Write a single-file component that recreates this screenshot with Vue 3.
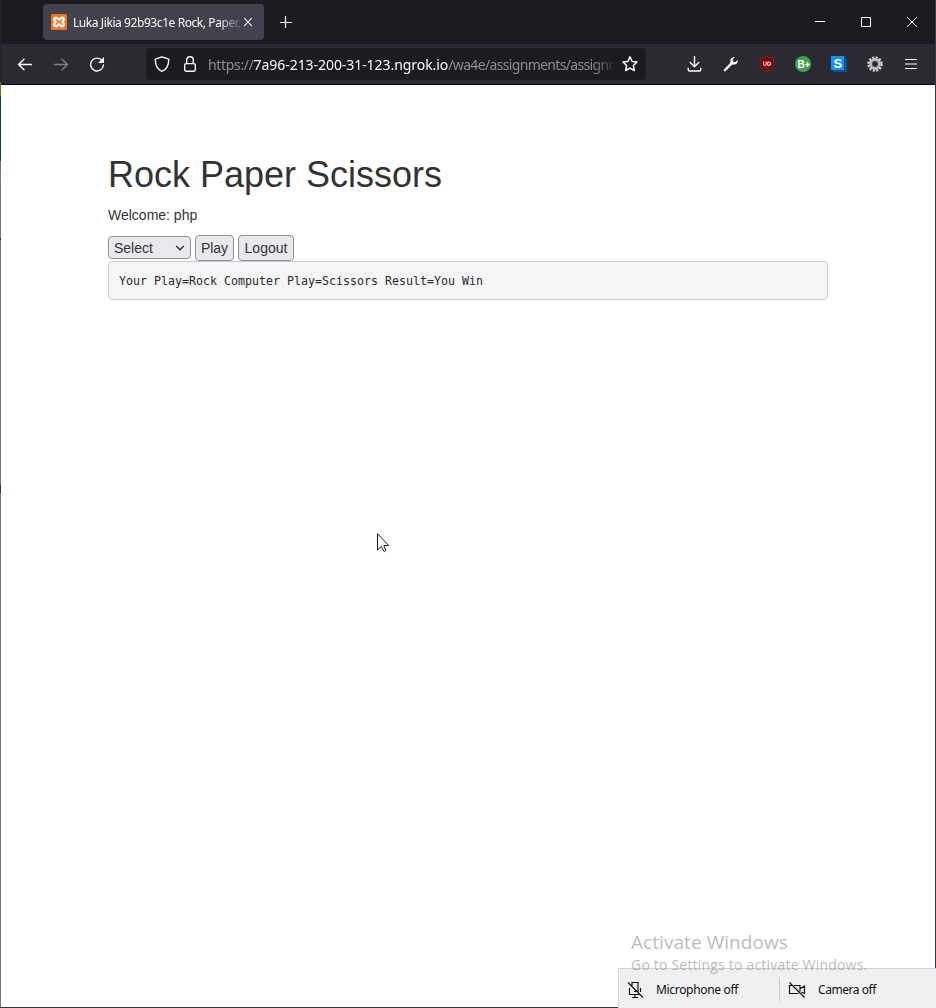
<script setup>
const title = 'Luka Jikia 92b93c1e Rock, Paper,'
const result = 'Your Play=Rock Computer Play=Scissors Result=You Win'
</script>

<template>
  <div class="window">
    <div class="edge"></div>
    <header class="tabbar">
      <div class="tab">
        <svg class="favicon" width="16" height="16" viewBox="0 0 16 16">
          <rect width="16" height="16" rx="1.5" fill="#f37623" />
          <path d="M5.3 3.6C3.4 3.6 2.9 4.8 3.3 6c.2.8.8 1.4 1.4 2-.7.6-1.4 1.2-1.5 2.2-.1 1.2.7 2.1 2 2.1C6.900 12.300 6.900 10 8 10s1.100 2.300 2.800 2.300c1.300 0 2.100-.9 2-2.100-.1-1-.8-1.600-1.500-2.200.6-.6 1.200-1.200 1.400-2 .4-1.200-.1-2.400-2-2.400-1.400 0-1.700 2.200-2.700 2.200S6.700 3.600 5.300 3.600Z" fill="none" stroke="#fff" stroke-width="2.200" />
        </svg>
        <span class="tab-title">{{ title }}</span>
        <svg class="close" width="10" height="10" viewBox="0 0 10 10"><path d="M1.200 1.200l7.600 7.600M8.800 1.200L1.200 8.800" stroke="#fbfbfe" stroke-width="1.100" /></svg>
      </div>
      <svg class="plus" width="12" height="12" viewBox="0 0 12 12"><path d="M0 6.500h12M5.500 0v12" stroke="#fbfbfe" stroke-width="1.200" /></svg>
      <div class="controls">
        <svg width="46" height="44" viewBox="0 0 46 44"><path d="M18 21.500h10" stroke="#fff" /></svg>
        <svg width="46" height="44" viewBox="0 0 46 44"><path d="M18.500 17.500h9v9h-9z" fill="none" stroke="#fff" /></svg>
        <svg width="46" height="44" viewBox="0 0 46 44"><path d="M18 17l10 10M28 17L18 27" stroke="#fff" /></svg>
      </div>
    </header>

    <nav class="toolbar">
      <div class="navs">
        <svg width="16" height="16" viewBox="0 0 16 16"><path d="M14.500 8.500H1.500M7 3.200L1.500 8.500l5.500 5.300" class="line" /></svg>
        <svg class="dim" width="16" height="16" viewBox="0 0 16 16"><path d="M1.500 8.500h13M9 3.200l5.500 5.300L9 13.800" class="line" /></svg>
        <svg width="16" height="16" viewBox="0 0 16 16"><path d="M13.200 4.800A6.400 6.400 0 1 0 14.400 9" class="line" /><path d="M15 1v6H9z" fill="#fbfbfe" /></svg>
      </div>
      <div class="urlbar">
        <svg class="shield" width="16" height="16" viewBox="0 0 16 16"><path d="M8 .8l6.200 2.100c.4.100.6.400.6.800C14.600 9 12.500 13.500 8 15.300 3.500 13.500 1.400 9 1.200 3.700c0-.4.200-.7.600-.8z" class="line" /></svg>
        <svg class="lock" width="14" height="16" viewBox="0 0 14 16"><rect x="1.700" y="7.600" width="10.600" height="7.600" rx="1.400" class="line" /><path d="M3.700 7.500V4a3.300 3.300 0 0 1 6.600 0v3.500" class="line" /></svg>
        <div class="url"><span class="scheme">https://</span><b>7a96-213-200-31-123.ngrok.io</b><span class="path">/wa4e/assignments/assignn</span></div>
        <svg class="star" width="16" height="16" viewBox="0 0 16 16"><path d="M8 .9l2.100 4.500 4.900.6-3.600 3.500.9 5-4.300-2.400-4.300 2.400.9-5L1 6l4.900-.6z" class="line star-line" /></svg>
      </div>
      <div class="extensions">
        <svg width="16" height="16" viewBox="0 0 16 16"><path d="M7.500 .5v10M3.300 6.500l4.200 4.200 4.200-4.200M1.200 12.200v1.300q0 1.500 1.500 1.500h9.600q1.500 0 1.500-1.500v-1.300" class="line" /></svg>
        <svg width="16" height="16" viewBox="0 0 16 16"><path d="M1.900 14.200L9.400 6.700" stroke="#fbfbfe" stroke-width="2.400" stroke-linecap="round" /><path d="M11.700 1C9 .8 6.700 3.400 7.500 6.200l-.8 1 2 2 1-.8c3 .9 5.600-1.500 5.100-4.500l-2.600 2.400-2.100-.5-.5-2.100z" fill="#fbfbfe" /></svg>
        <svg width="16" height="16" viewBox="0 0 16 16"><path d="M8 .3c1.800 1.400 4 1.800 6.700 1.700v6.800c0 3-3.300 5.300-6.700 7-3.400-1.700-6.700-4-6.700-7V2C4 2.100 6.200 1.700 8 .3Z" fill="#800000" stroke="#5d5057" stroke-width=".5" /><path d="M4.500 5.500v2.700q0 1.300 1.300 1.300t1.300-1.300V5.500M8.800 9.500V6h.5q2.400 0 2.400 1.750T9.300 9.500z" fill="none" stroke="#fff" /></svg>
        <svg width="16" height="16" viewBox="0 0 16 16"><circle cx="8" cy="8" r="8" fill="#3fa34b" /><text x="2.400" y="11.500" class="badge-text">B</text><path d="M10.200 8.500h4.500M12.500 6.300v4.500" stroke="#fff" stroke-width="1.500" /></svg>
        <svg width="16" height="16" viewBox="0 0 16 16"><path d="M0 13h13V0l3 3v13H3z" fill="#08528d" /><path d="M0 0h13v14H0z" fill="#1292ff" /><text x="2.500" y="11.600" class="s-text">S</text></svg>
        <svg width="16" height="16" viewBox="0 0 16 16"><circle cx="8" cy="8.300" r="6.500" fill="none" stroke="#777" stroke-width="2.600" stroke-dasharray="1.900 1.503" /><circle cx="8" cy="8" r="6.200" fill="none" stroke="#d5d5d3" stroke-width="2.800" stroke-dasharray="1.800 1.446" /><circle cx="8" cy="8" r="4.500" fill="none" stroke="#bbb" stroke-width="3" /><circle cx="8" cy="8" r="2.900" fill="#2b2a33" stroke="#777" stroke-width=".7" /></svg>
        <svg width="16" height="16" viewBox="0 0 16 16"><path d="M2 3.500h12M2 8h12M2 12.500h12" stroke="#fbfbfe" stroke-width="1.200" /></svg>
      </div>
    </nav>

    <main class="page">
      <h1>Rock Paper Scissors</h1>
      <p>Welcome: php</p>
      <form class="controls-row" @submit.prevent>
        <div class="select">Select
          <svg width="10" height="6" viewBox="0 0 10 6"><path d="M1.200 1L5 4.800 8.800 1" fill="none" stroke="#333" stroke-width="1.500" /></svg>
        </div>
        <button class="play">Play</button>
        <button class="logout">Logout</button>
      </form>
      <pre>{{ result }}</pre>
    </main>

    <svg class="cursor" width="13" height="20" viewBox="0 0 13 20"><path d="M.5.700v16.300l3.800-3.600 2.400 4.700q1 .9 2.300-.6l-2.200-4.900h5z" fill="#fff" stroke="#16161e" /></svg>

    <div class="frame"></div>
    <div class="devices">
      <div class="device mic">
        <svg width="18" height="18" viewBox="0 0 18 18"><path d="M5 5.500V1.500h6v9H7M2.500 7v6.500H12M13.500 7v4M8 13.500V17M5 16.500h6M1 1.500l15 15" class="dark" /></svg>
        <span>Microphone off</span>
      </div>
      <div class="device cam">
        <svg width="18" height="18" viewBox="0 0 18 18"><path d="M4 4.500H1.500v8h9M6 4.500h6v6M12.500 7.500l4-2.500v7.500l-3-1.500M1.500 1.500l15 15" class="dark" /></svg>
        <span>Camera off</span>
      </div>
    </div>
    <div class="watermark"><div class="w1">Activate Windows</div><div class="w2">Go to Settings to activate Windows.</div></div>
  </div>
</template>

<style>
body { margin: 0; background: #fff; }
</style>

<style scoped>
* { box-sizing: border-box; }
svg { display: block; flex: none; }
.window { position: relative; width: 936px; height: 1008px; overflow: hidden; background: #fff; padding: 0 1px; font-family: "Liberation Sans", Arial, sans-serif; }
.frame { position: absolute; inset: 0; border: solid #38373d; border-width: 0 1px 1px 0; pointer-events: none; }
.edge { position: absolute; left: 0; top: 0; width: 1px; height: 1008px; background: linear-gradient(#24262d 0 82px, #836818 82px 96px, #173765 96px 161px, #777 161px 172px, #4d8fbd 172px 178px, #777 178px 238px, #402735 238px 240px, #777 240px 485px, #173765 485px 493px, #777 493px); }
.tabbar { display: flex; align-items: center; height: 44px; background: #1c1b22; padding-left: 42px; }
.tab { display: flex; align-items: center; width: 221px; height: 36px; padding-left: 8px; border-radius: 4px; background: #42414d; }
.tab-title { width: 169px; margin-left: 6px; padding-top: 2px; white-space: nowrap; color: #fbfbfe; font: 12px/18px "Noto Sans", sans-serif; letter-spacing: -.42px; mask-image: linear-gradient(90deg, #000 145px, transparent 171px); }
.close { margin-left: 1px; }
.plus { margin-left: 16px; }
.controls { display: flex; margin-left: auto; }
.toolbar { display: flex; align-items: center; height: 41px; background: #2b2a33; border-bottom: 1px solid #08080b; }
.line { fill: none; stroke: #fbfbfe; stroke-width: 1.4; stroke-linecap: round; stroke-linejoin: round; }
.star-line { stroke-width: 1.500; }
.dim { opacity: .4; }
.navs { display: flex; gap: 20px; width: 145px; padding-left: 16px; }
.urlbar { display: flex; align-items: center; width: 500px; height: 32px; padding-left: 8px; background: #1c1b22; border-radius: 4px; }
.lock { margin-left: 13px; }
.url { width: 406px; margin-left: 11px; padding-top: 2px; white-space: nowrap; color: #8d8d93; font: 14px/22px "Noto Sans", sans-serif; mask-image: linear-gradient(90deg, #000 384px, transparent 410px); }
.url b { color: #fbfbfe; font-weight: 400; letter-spacing: -.06px; }
.scheme { letter-spacing: -.33px; }
.path { letter-spacing: -.66px; }
.star { margin-left: 8px; }
.extensions { display: flex; gap: 20px; margin-left: 41px; }
.badge-text { font: bold 10px "Liberation Sans", sans-serif; fill: #fff; }
.s-text { font: bold 13px "Liberation Sans", sans-serif; fill: #fff; }
.page { padding: 70px 107px 0; color: #333; }
h1 { margin: 0; font-size: 36px; line-height: 40px; font-weight: 400; }
p { margin: 10px 0 9px; font-size: 14px; line-height: 20px; }
.controls-row { display: flex; align-items: center; gap: 4px; height: 27px; }
.select, button { border: 1px solid #8f8f9d; border-radius: 4px; background: #e9e9ed; color: #333; font: 14px/20px "Liberation Sans", Arial, sans-serif; padding: 0; }
.select { display: flex; align-items: center; justify-content: space-between; width: 83px; height: 23px; padding: 0 5px; }
button { height: 26px; }
.play { width: 39px; }
.logout { width: 56px; }
pre { height: 39px; margin: 0; padding: 9px 10px; border: 1px solid #ccc; border-radius: 4px; background: #f5f5f5; color: #2b2b2b; font: 11.630px/20px "DejaVu Sans Mono", monospace; }
.cursor { position: absolute; left: 377px; top: 533px; }
.watermark { position: absolute; left: 631px; top: 930px; color: rgba(135, 135, 135, .58); white-space: nowrap; font-family: "Open Sans", sans-serif; }
.w1 { font-size: 19px; line-height: 25px; letter-spacing: .06px; }
.w2 { font-size: 14px; line-height: 20px; letter-spacing: .2px; }
.devices { position: absolute; left: 618px; top: 968px; width: 318px; height: 40px; display: flex; align-items: center; background: #f0f0f0; border: solid #d5d5d5; border-width: 1px 0 0 1px; color: #111; font: 12px/18px "Noto Sans", sans-serif; }
.device { display: flex; align-items: center; height: 24px; padding-top: 3px; }
.mic { width: 161px; padding-left: 8px; border-right: 1px solid #ccc; }
.cam { padding-left: 8px; }
.device span { margin-left: 11px; letter-spacing: -.32px; white-space: nowrap; }
.cam span { margin-left: 12px; letter-spacing: -.45px; }
.dark { fill: none; stroke: #111; stroke-width: 1.200; }
</style>
